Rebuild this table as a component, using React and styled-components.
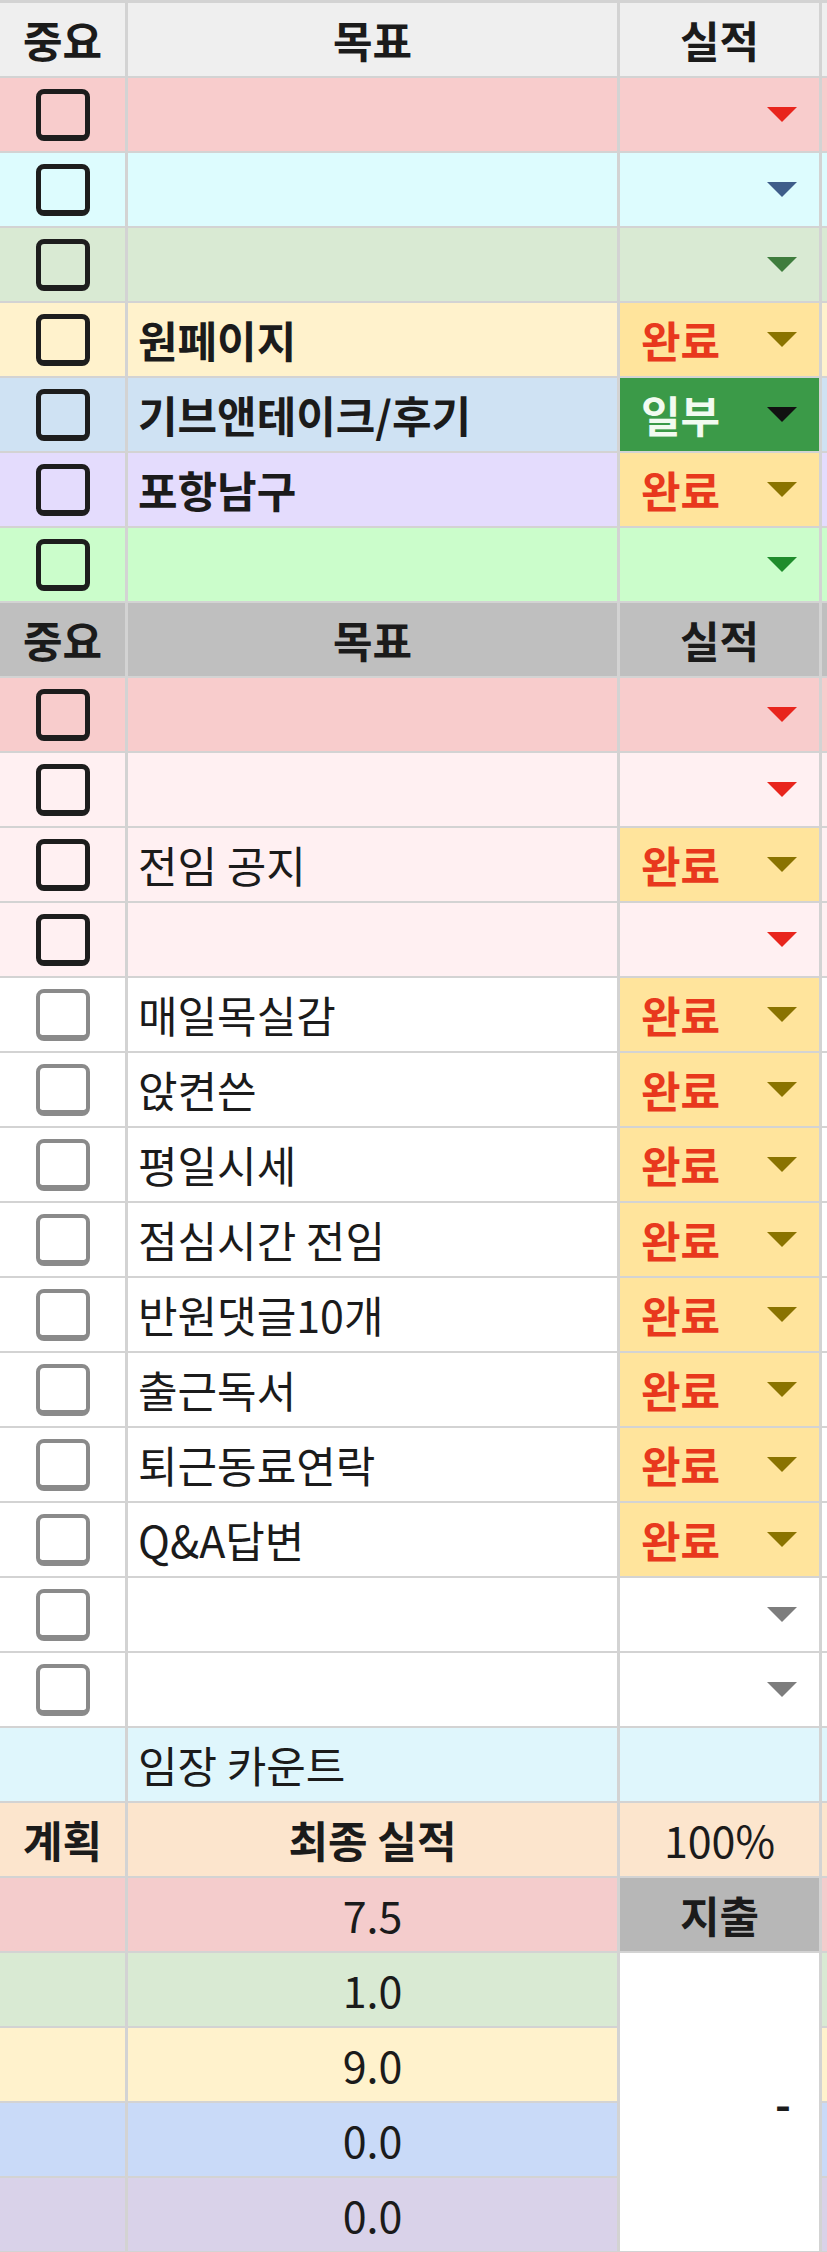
import React from 'react';
import styled, { createGlobalStyle } from 'styled-components';

const GlobalStyle = createGlobalStyle`
  body {
    margin: 0;
    background: #ffffff;
    font-family: "Noto Sans CJK KR", "Noto Sans", sans-serif;
  }
`

const Sheet = styled.div`
  display: grid;
  grid-template-columns: 125px 489px 199px 1fr;
  grid-auto-rows: 73px;
  column-gap: 3px;
  row-gap: 2px;
  padding: 3px 0 1px;
  width: 827px;
  background: #d3d3d3;
  color: #1b1b1b;
`

const Cell = styled.div`
  background: ${p => p.$bg};
  display: flex;
  align-items: center;
  justify-content: ${p => p.$align || 'flex-start'};
  padding: 0 10px;
  font-size: 43px;
  line-height: 1;
  font-weight: ${p => (p.$bold ? 700 : 400)};
  white-space: nowrap;
  overflow: hidden;
`

const Edge = styled.div`
  grid-column: 4;
  background: ${p => p.$bg};
`

const Merged = styled(Cell)`
  grid-row: span 4;
  justify-content: flex-end;
  padding-right: 28px;
  font-weight: 700;
`

const Status = styled.div`
  background: ${p => p.$bg};
  display: flex;
  align-items: center;
  justify-content: space-between;
  padding: 0 22px 0 21px;
  font-size: 43px;
  line-height: 1;
  font-weight: 700;
  color: ${p => p.$color};
`

const Triangle = styled.span`
  width: 0;
  height: 0;
  margin-left: auto;
  border-left: 15px solid transparent;
  border-right: 15px solid transparent;
  border-top: 15px solid ${p => p.$color};
`

const CheckBox = styled.span`
  box-sizing: border-box;
  width: 54px;
  height: 52px;
  border: ${p => (p.$dim ? '4px solid #8a8a8a' : '5px solid #1d1d1d')};
  border-bottom-width: 6px;
  border-radius: 8px;
  background: ${p => (p.$dim ? '#ffffff' : 'transparent')};
`

const STATUS = {
  done: { bg: '#ffe49c', color: '#e8381d', label: '완료', tri: '#8a7300' },
  part: { bg: '#3b9a48', color: '#f2fbf1', label: '일부', tri: '#111111' },
}

const top = [
  { bg: '#f8cccc', tri: '#e8251d' },
  { bg: '#ddfcfe', tri: '#3e5d8a' },
  { bg: '#d9ead3', tri: '#3f7d3d' },
  { bg: '#fff2cc', text: '원페이지', status: 'done' },
  { bg: '#cfe2f3', text: '기브앤테이크/후기', status: 'part' },
  { bg: '#e4dcfd', text: '포항남구', status: 'done' },
  { bg: '#cbfdcb', tri: '#1f8c2c' },
]

const bottom = [
  { bg: '#f8cccc', tri: '#e8251d' },
  { bg: '#fff0f2', tri: '#e8251d' },
  { bg: '#fff0f2', text: '전임 공지', status: 'done' },
  { bg: '#fff0f2', tri: '#e8251d' },
  { bg: '#ffffff', text: '매일목실감', status: 'done', dim: true },
  { bg: '#ffffff', text: '앉켠쓴', status: 'done', dim: true },
  { bg: '#ffffff', text: '평일시세', status: 'done', dim: true },
  { bg: '#ffffff', text: '점심시간 전임', status: 'done', dim: true },
  { bg: '#ffffff', text: '반원댓글10개', status: 'done', dim: true },
  { bg: '#ffffff', text: '출근독서', status: 'done', dim: true },
  { bg: '#ffffff', text: '퇴근동료연락', status: 'done', dim: true },
  { bg: '#ffffff', text: 'Q&A답변', status: 'done', dim: true },
  { bg: '#ffffff', tri: '#7d7d7d', dim: true },
  { bg: '#ffffff', tri: '#7d7d7d', dim: true },
]

const totals = [
  { bg: '#f4cccc', value: '7.5' },
  { bg: '#d9ead3', value: '1.0' },
  { bg: '#fff2cc', value: '9.0' },
  { bg: '#c9daf8', value: '0.0' },
  { bg: '#d9d2e9', value: '0.0' },
]

function HeaderRow({ bg }) {
  return (
    <>
      <Cell $bg={bg} $align="center" $bold>중요</Cell>
      <Cell $bg={bg} $align="center" $bold>목표</Cell>
      <Cell $bg={bg} $align="center" $bold>실적</Cell>
      <Edge $bg={bg} />
    </>
  )
}

function GoalRow({ row, bold }) {
  const st = row.status && STATUS[row.status]
  return (
    <>
      <Cell $bg={row.bg} $align="center">
        <CheckBox $dim={row.dim} />
      </Cell>
      <Cell $bg={row.bg} $bold={bold}>{row.text}</Cell>
      {st ? (
        <Status $bg={st.bg} $color={st.color}>
          {st.label}
          <Triangle $color={st.tri} />
        </Status>
      ) : (
        <Status $bg={row.bg}>
          <Triangle $color={row.tri} />
        </Status>
      )}
      <Edge $bg={row.bg} />
    </>
  )
}

export default function App() {
  return (
    <>
      <GlobalStyle />
      <Sheet>
        <HeaderRow bg="#efefef" />
        {top.map((r, i) => <GoalRow key={'t' + i} row={r} bold />)}
        <HeaderRow bg="#bfbfbf" />
        {bottom.map((r, i) => <GoalRow key={'b' + i} row={r} />)}

        <Cell $bg="#dff6fc" />
        <Cell $bg="#dff6fc">임장 카운트</Cell>
        <Cell $bg="#dff6fc" />
        <Edge $bg="#dff6fc" />

        <Cell $bg="#fce5cd" $align="center" $bold>계획</Cell>
        <Cell $bg="#fce5cd" $align="center" $bold>최종 실적</Cell>
        <Cell $bg="#fce5cd" $align="center">100%</Cell>
        <Edge $bg="#fce5cd" />

        {totals.map((t, i) => (
          <React.Fragment key={'s' + i}>
            <Cell $bg={t.bg} />
            <Cell $bg={t.bg} $align="center">{t.value}</Cell>
            {i === 0 && <Cell $bg="#b7b7b7" $align="center" $bold>지출</Cell>}
            {i === 1 && <Merged $bg="#ffffff">-</Merged>}
            <Edge $bg={t.bg} />
          </React.Fragment>
        ))}
      </Sheet>
    </>
  )
}
